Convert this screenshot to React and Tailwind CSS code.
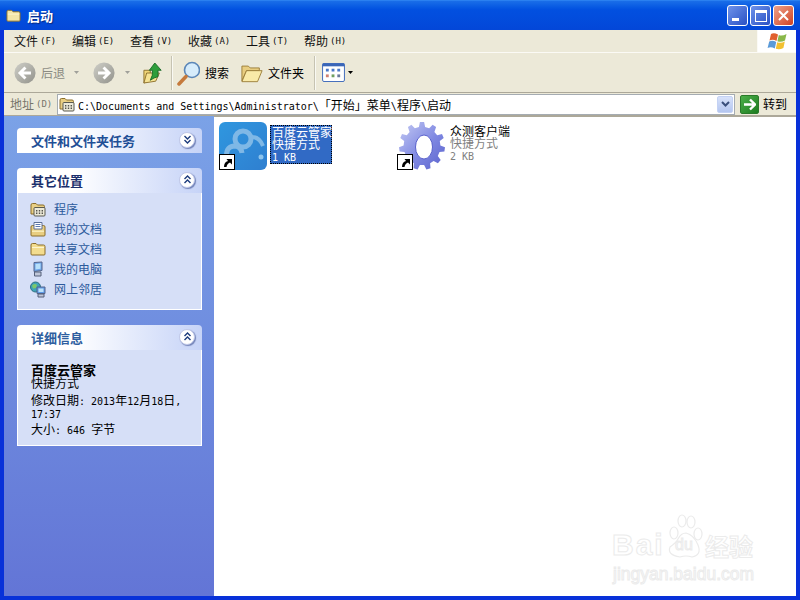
import React from "react";

const CJK = '"Noto Sans CJK SC", "Liberation Sans", sans-serif';

// Latin runs in the narrow half-width cell, CJK runs at full 12px
function T({ children, className = "" }) {
  const parts = String(children).split(/([\x20-\x7e]+)/).filter(Boolean);
  return (
    <span className={`whitespace-nowrap ${className}`}>
      {parts.map((p, i) =>
        /^[\x20-\x7e]+$/.test(p) ? (
          <span key={i} className="font-['DejaVu_Sans_Mono'] text-[10px] leading-none whitespace-pre">{p}</span>
        ) : (
          <span key={i}>{p}</span>
        )
      )}
    </span>
  );
}

function MenuItem({ label, keyName }) {
  return (
    <div className="w-[58px] flex items-center whitespace-nowrap">
      <span>{label}</span>
      <span className="ml-[2px] font-['DejaVu_Sans_Mono'] text-[9px] leading-none">({keyName})</span>
    </div>
  );
}

function FolderIcon({ size = 16, className = "", fill = "#f3dc8e" }) {
  return (
    <svg width={size} height={size} viewBox="0 0 16 16" className={className}>
      <path d="M1 4 Q1 2.5 2.5 2.5 H6 L7.5 4 H13.5 Q15 4 15 5.5 V13 Q15 14 14 14 H2 Q1 14 1 13 Z" fill={fill} stroke="#8a6d2a" strokeWidth="1" />
      <path d="M2 6 H14 V7 H2 Z" fill="#fdf5cf" />
    </svg>
  );
}

function ProgramsIcon() {
  return (
    <svg width="16" height="16" viewBox="0 0 16 16">
      <path d="M1 4 Q1 2.5 2.5 2.5 H6 L7.5 4 H13 Q14.5 4 14.5 5.5 V13 H1 Z" fill="#e9cf84" stroke="#8a6d2a" />
      <rect x="4" y="6.5" width="11" height="8.5" rx="1" fill="#ece9d8" stroke="#5a5a50" />
      <path d="M6 9h1.4v1.4H6zM8.8 9h1.4v1.4H8.8zM11.6 9H13v1.4h-1.4zM6 11.6h1.4V13H6zM8.8 11.6h1.4V13H8.8zM11.6 11.6H13V13h-1.4z" fill="#55554d" />
    </svg>
  );
}

function DocsIcon() {
  return (
    <svg width="16" height="16" viewBox="0 0 16 16">
      <path d="M1 6 Q1 4.5 2.5 4.5 H13.5 Q15 4.5 15 6 V14 Q15 15 14 15 H2 Q1 15 1 14 Z" fill="#e8cd80" stroke="#8a6d2a" />
      <path d="M4 1.5 H12 V8 H4 Z" fill="#fff" stroke="#5c6f96" />
      <path d="M5.5 3.5h5M5.5 5.5h5" stroke="#5c78b0" />
      <path d="M2 9.5 H14 V11 H2 Z" fill="#f8ecb8" />
    </svg>
  );
}

function ComputerIcon() {
  return (
    <svg width="16" height="16" viewBox="0 0 16 16">
      <path d="M4 1.5 L12 1 V9.5 L4 10.5 Z" fill="#6fa6ea" stroke="#55658a" />
      <path d="M5.5 3 L10.5 2.6 V7.8 L5.5 8.6 Z" fill="#b7e0fa" />
      <path d="M4.5 11 H11 V15 H4.5 Z" fill="#bfc6d8" stroke="#55607a" />
    </svg>
  );
}

function NetworkIcon() {
  return (
    <svg width="16" height="17" viewBox="0 0 16 17">
      <circle cx="5.5" cy="6" r="5" fill="#3fa3b8" stroke="#2d6f80" />
      <path d="M2 4.5 Q5 2 7 4 L6 7 L3 7.5 Z" fill="#7cc86a" />
      <path d="M7 6 H15 V12.5 H7 Z" fill="#5e9ae6" stroke="#54658c" />
      <path d="M8.5 7.5 H13.5 V11 H8.5 Z" fill="#bce2fa" />
      <path d="M8 13 H14 V16 H8 Z" fill="#bfc6d8" stroke="#55607a" />
    </svg>
  );
}

function Chevrons({ up, color = "#1c3b7c" }) {
  const d = up ? "M3.5 6 L6.5 3 L9.5 6 M3.5 10 L6.5 7 L9.5 10" : "M3.5 3 L6.5 6 L9.5 3 M3.5 7 L6.5 10 L9.5 7";
  return (
    <div className="mb-[2px] w-4 h-4 rounded-full bg-white border border-[#c0c8e8] shadow-[1px_1px_1px_rgba(40,60,130,0.55)] flex items-center justify-center">
      <svg width="13" height="13" viewBox="0 0 13 13">
        <path d={d} fill="none" stroke={color} strokeWidth="1.4" />
      </svg>
    </div>
  );
}

function PanelHeader({ title, up, color = "text-[#1f4f96]" }) {
  return (
    <div className="h-[25px] rounded-t-[4px] bg-gradient-to-r from-white from-30% to-[#c6d3f7] flex items-center justify-between pl-[14px] pr-[7px]">
      <span className={`text-[13px] font-bold ${color}`}>{title}</span>
      <Chevrons up={up} />
    </div>
  );
}

function NavRow({ icon, label }) {
  return (
    <div className="h-5 flex items-center">
      <div className="w-[16px] h-[16px] ml-[12px] mr-[8px] flex items-center">{icon}</div>
      <span className="text-[12px] text-[#2c5a9c]">{label}</span>
    </div>
  );
}

function RoundArrow({ dir }) {
  return (
    <svg width="22" height="22" viewBox="0 0 24 24">
      <defs>
        <linearGradient id={`round-${dir}`} x1="0" y1="0" x2="1" y2="1">
          <stop offset="0" stopColor="#cfcfc8" />
          <stop offset="1" stopColor="#92928b" />
        </linearGradient>
      </defs>
      <circle cx="12" cy="12" r="11.5" fill={`url(#round-${dir})`} />
      <path d={dir === "left" ? "M12.5 6 L6.5 12 L12.5 18 M7 12 H18.5" : "M11.5 6 L17.5 12 L11.5 18 M17 12 H5.5"} fill="none" stroke="#fff" strokeWidth="3.2" />
    </svg>
  );
}

function Caret({ color = "#a0a09a" }) {
  return (
    <svg width="5" height="3" viewBox="0 0 5 3" className="block">
      <path d="M0 0 H5 L2.5 3 Z" fill={color} />
    </svg>
  );
}

function Sep() {
  return <div className="w-[2px] h-[34px] border-l border-[#c6c3b2] bg-white/70" />;
}

function Shortcut({ className = "" }) {
  return (
    <div className={`absolute left-0 bottom-0 w-[16px] h-[16px] bg-white border border-black flex items-center justify-center ${className}`}>
      <svg width="11" height="11" viewBox="0 0 11 11">
        <path d="M2 10 Q2 5 6 4 L4.5 2 H10 V7.5 L8 5.5 Q5 6.5 4.5 10 Z" fill="#000" />
      </svg>
    </div>
  );
}

// Cog outline built from evenly spaced teeth, squashed a little for the tilted look
function gearPath(cx, cy, rx, ry, teeth) {
  const pts = [];
  for (let i = 0; i < teeth; i++) {
    const a = (i / teeth) * Math.PI * 2 - Math.PI / 2;
    const s = (Math.PI * 2) / teeth;
    [[-0.3, 0.8], [-0.16, 1], [0.16, 1], [0.3, 0.8]].forEach(([o, r]) => {
      const t = a + o * s;
      pts.push(`${(cx + Math.cos(t) * rx * r).toFixed(1)},${(cy + Math.sin(t) * ry * r).toFixed(1)}`);
    });
  }
  return "M" + pts.join(" L") + " Z";
}

function Watermark() {
  const stroke = "text-transparent [-webkit-text-stroke:1px_#ebebeb]";
  return (
    <div className="absolute left-[609px] top-[510px] w-[150px] h-[76px] pointer-events-none font-['Liberation_Sans']">
      <span className={`absolute left-[3px] top-[20px] text-[30px] leading-none font-bold tracking-[2px] ${stroke}`}>Bai</span>
      <svg width="42" height="50" viewBox="0 0 42 50" className="absolute left-[55px] top-[3px]">
        <g fill="none" stroke="#ebebeb" strokeWidth="1.2">
          <ellipse cx="10" cy="20" rx="4" ry="6" />
          <ellipse cx="18" cy="8" rx="4" ry="6" />
          <ellipse cx="27" cy="9" rx="4" ry="6" />
          <ellipse cx="34" cy="21" rx="4" ry="6" />
          <path d="M22 20 Q30 22 34 32 Q38 42 28 44 Q22 42 16 44 Q3 42 6 34 Q12 30 14 26 Q17 20 22 20 Z" />
        </g>
      </svg>
      <span className={`absolute left-[66px] top-[27px] text-[16px] leading-none ${stroke}`}>du</span>
      <span className={`absolute left-[96px] top-[24px] text-[24px] leading-none font-bold font-['Noto_Sans_CJK_SC'] ${stroke}`}>经验</span>
      <span className={`absolute left-[4px] top-[56px] text-[17.5px] leading-none whitespace-nowrap ${stroke}`}>jingyan.baidu.com</span>
    </div>
  );
}

export default function App() {
  return (
    <div
      className="relative w-[800px] h-[600px] bg-[#0831d9] flex flex-col overflow-hidden text-black"
      style={{ fontFamily: CJK }}
    >
      {/* title bar */}
      <div className="h-[30px] shrink-0 bg-gradient-to-b from-[#1a6ee8] via-[#0250e0] via-30% to-[#0347d8] flex items-center pl-[6px] pr-[6px] border-t border-[#2a80f0]">
        <FolderIcon size={15} fill="#f3e5a8" />
        <span className="ml-[6px] text-[13px] font-bold text-white [text-shadow:1px_1px_1px_#0a2a80]">启动</span>
        <div className="ml-auto flex gap-[2px]">
          <div className="w-[21px] h-[21px] rounded-[3px] border border-white bg-gradient-to-br from-[#6f92ea] to-[#2a50c4] flex items-end pl-[4px] pb-[4px]">
            <div className="w-[7px] h-[3px] bg-white" />
          </div>
          <div className="w-[21px] h-[21px] rounded-[3px] border border-white bg-gradient-to-br from-[#6f92ea] to-[#2a50c4] flex items-center justify-center">
            <div className="w-[12px] h-[12px] border border-white border-t-[3px]" />
          </div>
          <div className="w-[21px] h-[21px] rounded-[3px] border border-white bg-gradient-to-br from-[#eca18a] to-[#cf3e1e] flex items-center justify-center">
            <svg width="13" height="13" viewBox="0 0 13 13">
              <path d="M2 2 L11 11 M11 2 L2 11" stroke="#fff" strokeWidth="2" />
            </svg>
          </div>
        </div>
      </div>

      {/* window body inside the blue frame */}
      <div className="flex-1 min-h-0 mx-[4px] mb-[4px] flex flex-col bg-[#ece9d8]">
        {/* menu bar */}
        <div className="h-[23px] shrink-0 flex border-b border-[#fbfaf5]">
          <div className="flex-1 flex items-center pl-[10px] text-[12px] text-[#111]">
            <MenuItem label="文件" keyName="F" />
            <MenuItem label="编辑" keyName="E" />
            <MenuItem label="查看" keyName="V" />
            <MenuItem label="收藏" keyName="A" />
            <MenuItem label="工具" keyName="T" />
            <MenuItem label="帮助" keyName="H" />
          </div>
          <div className="w-[39px] bg-white flex items-center justify-center border-l border-[#fbfaf5]">
            <svg width="20" height="19" viewBox="0 0 20 19">
              <path d="M4 2 Q7 0.5 11 2.5 L9.5 9 Q6 7 2.5 8.5 Z" fill="#e0602e" />
              <path d="M11.8 3 Q15 4.5 19.5 2 L18 8.5 Q14 10.5 10.4 9.2 Z" fill="#8ab84a" />
              <path d="M2.2 9.5 Q5.5 8 9.2 10 L7.8 16.5 Q4 14.5 0.6 16 Z" fill="#5a9ad8" />
              <path d="M10.2 10.2 Q14 11.5 17.8 9.5 L16.4 16 Q12.5 18 8.8 16.8 Z" fill="#f2c030" />
            </svg>
          </div>
        </div>

        {/* toolbar */}
        <div className="h-[40px] shrink-0 flex items-center pl-[10px] border-b border-[#aca899]">
          <RoundArrow dir="left" />
          <span className="ml-[5px] text-[12px] text-[#8a8a82]">后退</span>
          <div className="ml-[9px]"><Caret /></div>
          <div className="ml-[14px]"><RoundArrow dir="right" /></div>
          <div className="ml-[10px]"><Caret /></div>
          <svg width="20" height="24" viewBox="0 0 22 24" className="ml-[13px]">
            <path d="M1 9 H8 V20 L1 23 Z" fill="#f0d678" stroke="#8a6d2a" />
            <path d="M1 23 L4 12 H18 L14 21 Z" fill="#f6e394" stroke="#8a6d2a" />
            <path d="M13 1 L20 9 H16.5 V16 Q12 17 8 20 Q11 15 10.5 9 H7 Z" fill="#2f9e3c" stroke="#1c6b28" />
          </svg>
          <div className="ml-[8px]"><Sep /></div>
          <svg width="24" height="26" viewBox="0 0 24 26" className="ml-[3px]">
            <circle cx="16" cy="10" r="7.5" fill="#d6ecfb" stroke="#5b87b8" strokeWidth="1.6" />
            <path d="M3 24 L10 16.5" stroke="#c57a3c" strokeWidth="3.5" strokeLinecap="round" />
          </svg>
          <span className="ml-[5px] text-[12px]">搜索</span>
          <svg width="22" height="21" viewBox="0 0 24 22" className="ml-[12px]">
            <path d="M1 4 H8 L10 6 H20 V9 H6 L1 20 Z" fill="#e8cd80" stroke="#9a7d38" />
            <path d="M1 21 L6 9 H23 L18 21 Z" fill="#f9eaa8" stroke="#9a7d38" />
          </svg>
          <span className="ml-[5px] text-[12px]">文件夹</span>
          <div className="ml-[10px]"><Sep /></div>
          <svg width="23" height="19" viewBox="0 0 24 20" className="ml-[6px]">
            <rect x="0.5" y="0.5" width="23" height="19" rx="1.5" fill="#fff" stroke="#3a66b8" />
            <rect x="0.5" y="0.5" width="23" height="3" fill="#3a66b8" />
            <path d="M4 6h3v3H4zM10 6h3v3h-3zM16 6h3v3h-3z" fill="#4a78c8" />
            <path d="M4 12h3v3H4z" fill="#d08070" /><path d="M10 12h3v3h-3z" fill="#70a060" /><path d="M16 12h3v3h-3z" fill="#6a7a9a" />
          </svg>
          <div className="ml-[3px]"><Caret color="#000" /></div>
        </div>

        {/* address bar */}
        <div className="h-[23px] shrink-0 flex items-center border-b border-[#aca899]">
          <div className="ml-[6px] w-[47px] flex items-center whitespace-nowrap text-[12px] text-[#77756b]">
            <span>地址</span>
            <span className="ml-[2px] font-['DejaVu_Sans_Mono'] text-[9px] leading-none">(D)</span>
          </div>
          <div className="w-[678px] h-[21px] bg-white border border-[#a5acb2] flex items-center pl-[1px] pr-[1px]">
            <ProgramsIcon />
            <T className="ml-[3px] pt-[1px] text-[12px]">{"C:\\Documents and Settings\\Administrator\\「开始」菜单\\程序\\启动"}</T>
            <div className="ml-auto w-[16px] h-[17px] rounded-[2px] bg-gradient-to-b from-[#d8e2fa] to-[#b4c6f0] border border-[#c4d2f4] flex items-center justify-center">
              <svg width="9" height="7" viewBox="0 0 9 7">
                <path d="M1 1 L4.5 4.5 L8 1" fill="none" stroke="#3a4f7c" strokeWidth="2" />
              </svg>
            </div>
          </div>
          <div className="ml-[5px] w-[19px] h-[19px] rounded-[2px] bg-gradient-to-br from-[#4cb04a] to-[#1c7c20] flex items-center justify-center border border-[#2a7a2a]">
            <svg width="13" height="13" viewBox="0 0 13 13">
              <path d="M7 1.5 L12 6.5 L7 11.5 M11 6.5 H1" fill="none" stroke="#fff" strokeWidth="2.4" />
            </svg>
          </div>
          <span className="ml-[4px] text-[12px]">转到</span>
        </div>

        {/* sidebar and file area */}
        <div className="flex-1 min-h-0 flex">
          <div className="w-[210px] shrink-0 bg-gradient-to-b from-[#7ba2e7] to-[#6375d6] pl-[13px] pr-[12px] pt-[12px] flex flex-col gap-[15px]">
            <PanelHeader title="文件和文件夹任务" />
            <div>
              <PanelHeader title="其它位置" up color="text-[#1a2f6c]" />
              <div className="h-[117px] bg-[#d6dff7] border border-t-0 border-white pt-[6px]">
                <NavRow icon={<ProgramsIcon />} label="程序" />
                <NavRow icon={<DocsIcon />} label="我的文档" />
                <NavRow icon={<FolderIcon />} label="共享文档" />
                <NavRow icon={<ComputerIcon />} label="我的电脑" />
                <NavRow icon={<NetworkIcon />} label="网上邻居" />
              </div>
            </div>
            <div>
              <PanelHeader title="详细信息" up color="text-[#2f5fa0]" />
              <div className="h-[96px] bg-[#d6dff7] border border-t-0 border-white pl-[13px] pr-[10px] pt-[13px] text-[12px] leading-[13px]">
                <div className="h-[13px] text-[13px] font-bold">百度云管家</div>
                <div className="h-[13px]">快捷方式</div>
                <div className="h-[13px] mt-[4px]"><T>修改日期: 2013年12月18日,</T></div>
                <div className="h-[13px]"><T>17:37</T></div>
                <div className="h-[13px] mt-[3px]"><T>大小: 646 字节</T></div>
              </div>
            </div>
          </div>

          <div className="flex-1 bg-white pt-[5px] pl-[5px] flex border-t border-[#aca899]">
            {/* selected shortcut */}
            <div className="w-[178px] flex items-start">
              <div className="relative w-[48px] h-[48px] rounded-[6px] bg-gradient-to-br from-[#2f97df] to-[#2f7fd0]">
                <svg width="48" height="48" viewBox="0 0 48 48">
                  <circle cx="24" cy="17" r="8" fill="none" stroke="#7fb8e6" strokeWidth="5" />
                  <path d="M8 36 Q6 25 15 24 Q22 24 23 31" fill="none" stroke="#7fb8e6" strokeWidth="5" />
                  <path d="M31 15 Q40 14 44 24" fill="none" stroke="#7fb8e6" strokeWidth="4" />
                  <circle cx="42" cy="35" r="2.5" fill="#8dc4ec" />
                </svg>
                <Shortcut />
              </div>
              <div className="ml-[3px] mt-[3px] w-[62px] h-[39px] bg-[#316ac5] outline-1 outline-dotted outline-white text-white text-[12px] leading-[13px] pl-[1px] border border-dotted border-black">
                <div className="h-[12px] leading-[12px] whitespace-nowrap">百度云管家</div>
                <div className="h-[12px] leading-[12px] whitespace-nowrap">快捷方式</div>
                <div className="h-[12px] leading-[12px]"><T>1 KB</T></div>
              </div>
            </div>
            {/* second shortcut */}
            <div className="flex items-start">
              <div className="relative w-[48px] h-[48px]">
                <svg width="48" height="48" viewBox="0 0 48 48">
                  <defs>
                    <linearGradient id="gear-body" x1="0" y1="0" x2="1" y2="1">
                      <stop offset="0" stopColor="#c6ccf4" />
                      <stop offset="0.55" stopColor="#7f88e2" />
                      <stop offset="1" stopColor="#5a62cc" />
                    </linearGradient>
                  </defs>
                  <path d={gearPath(25, 24, 23, 24, 11)} fill="url(#gear-body)" />
                  <ellipse cx="27" cy="25" rx="8.5" ry="12" fill="#fff" stroke="#5a62cc" />
                </svg>
                <Shortcut />
              </div>
              <div className="ml-[5px] mt-[3px] text-[12px] leading-[13px] text-[#7f7f7f]">
                <div className="h-[12px] leading-[12px] text-black whitespace-nowrap">众测客户端</div>
                <div className="h-[12px] leading-[12px]">快捷方式</div>
                <div className="h-[12px] leading-[12px]"><T>2 KB</T></div>
              </div>
            </div>
          </div>
        </div>
      </div>
      <Watermark />
    </div>
  );
}
